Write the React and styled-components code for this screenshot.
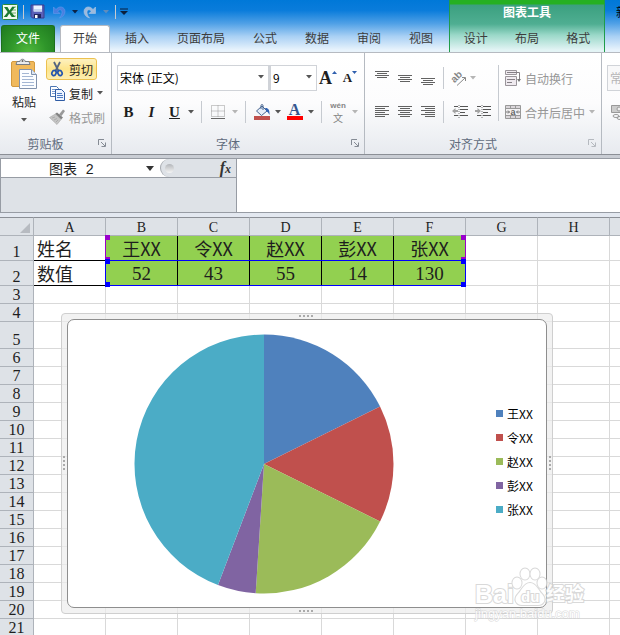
import React, { Component } from 'react'
import styled, { createGlobalStyle } from 'styled-components'

const names = ['王XX', '令XX', '赵XX', '彭XX', '张XX']
const values = [52, 43, 55, 14, 130]
const colors = ['#4f81bd', '#c0504d', '#9bbb59', '#8064a2', '#4bacc6']
const columns = ['A', 'B', 'C', 'D', 'E', 'F', 'G', 'H', 'I']
const rowHeights = { 1: 25, 2: 25, 5: 27 }
const rows = Array.from({ length: 21 }, (_, i) => i + 1)

const Arrow = ({ color = '#555' }) => (
    <svg width="6" height="4" viewBox="0 0 6 4"><path d="M0 0h6L3 3.5z" fill={color} /></svg>
)

const Launcher = ({ faded }) => (
    <svg width="8" height="8" viewBox="0 0 8 8" fill="none" stroke={faded ? '#b5b9bf' : '#858b94'}>
        <path d="M.5 6V.5H6M3 3l4 4M7.500 3.500v4h-4" />
    </svg>
)

const ExcelIcon = () => (
    <svg width="16" height="16" viewBox="0 0 16 16">
        <rect x=".5" y=".5" width="15" height="15" rx="1" fill="#f1f9ef" stroke="#2c8a3a" />
        <path d="M10 3h4M10 6h4M10 9h4M10 12h4" stroke="#74b36b" />
        <path d="M2 3h3.500l2 3.500L10 3h3L9.200 8l4 5H9.700L7.300 9.600 5 13H1.700l4-5z" fill="#1d7b31" />
    </svg>
)

const SaveIcon = () => (
    <svg width="15" height="15" viewBox="0 0 15 15">
        <path d="M1 1h13v13H2.500L1 12.500z" fill="#5a60b8" stroke="#383e90" />
        <path d="M3.500 1.500h8.500v6H3.500z" fill="#eaf2ff" />
        <path d="M4 5h8v2.500H4z" fill="#c3d3f0" />
        <path d="M4 10h7v4H4z" fill="#20255e" />
        <path d="M5 11h2.500v3H5z" fill="#fff" />
    </svg>
)

const UndoIcon = ({ redo }) => (
    <svg width="14" height="14" viewBox="0 0 14 14">
        <g transform={redo ? 'translate(14 0) scale(-1 1)' : undefined}>
            <path
                d="M1.500 2v6.500h6.500L5.800 6.300C7.500 4 10 4.500 10 7.500c0 2-1 3.800-2.500 5.500 3.500-1.200 5.500-3.500 5.500-6.500C13 1.500 7 .3 4 4.500z"
                fill={redo ? '#9db9dc' : '#4a7fe0'}
                stroke={redo ? '#a9c8e8' : '#5f9aec'}
                strokeWidth=".6"
            />
        </g>
    </svg>
)

const PasteIcon = () => (
    <svg width="28" height="32" viewBox="0 0 28 32">
        <rect x="1.500" y="3.500" width="23" height="25" rx="1.500" fill="#f0b95c" stroke="#d39a3e" />
        <path d="M7 3.500h3C10 .5 15 .5 15 3.500h4l1 3H6z" fill="#e9ebee" stroke="#777c84" />
        <circle cx="12.500" cy="3" r="1" fill="#666" />
        <path d="M9.500 11.500h12l5 5v14h-17z" fill="#fbfdff" stroke="#8192ac" />
        <path d="M21.500 11.500v5h5" fill="#dce6f3" stroke="#8192ac" />
        <path d="M12 15.500h7M12 18.500h11M12 21.500h12M12 24.500h12M12 27.500h12" stroke="#a3b6d3" />
    </svg>
)

const CutIcon = () => (
    <svg width="16" height="16" viewBox="0 0 16 16" fill="none">
        <path d="M5 1l4.500 9M11 1L6.500 10" stroke="#53647f" strokeWidth="1.800" />
        <ellipse cx="5" cy="12" rx="2" ry="2.600" transform="rotate(25 5 12)" stroke="#2455ae" strokeWidth="1.700" />
        <ellipse cx="11" cy="12" rx="2" ry="2.600" transform="rotate(-25 11 12)" stroke="#2455ae" strokeWidth="1.700" />
    </svg>
)

const CopyIcon = () => (
    <svg width="16" height="16" viewBox="0 0 16 16">
        <path d="M1.500 1.500h6l2 2v8h-8z" fill="#fff" stroke="#4d76b3" />
        <path d="M3 4.500h4M3 6.500h4M3 8.500h4" stroke="#7a9bd0" />
        <path d="M6.500 4.500h6l3 3v8h-9z" fill="#eef4ff" stroke="#2f5ca4" />
        <path d="M8 8.500h5M8 10.500h6M8 12.500h6" stroke="#4f7cc2" />
    </svg>
)

const BrushIcon = () => (
    <svg width="16" height="16" viewBox="0 0 16 16">
        <path d="M10 5.500l4-5 2 1.500-3.500 5z" fill="#999" />
        <path d="M8 3.500l6 5-2 2-6-5.500z" fill="#828282" />
        <path d="M6.500 5L12 10.500l-4 5L.5 8.500z" fill="#c4c4c4" stroke="#a5a5a5" strokeWidth=".6" />
        <path d="M3 9l3-1M5 11l3-1.500M7 13l2-2" stroke="#999" strokeWidth=".6" />
    </svg>
)

const BordersIcon = () => (
    <svg width="14" height="14" viewBox="0 0 14 14" stroke="#999" fill="none">
        <path d="M.5.5h13v11H.5zM.5 6h13M7 .5v11" strokeDasharray="1 1" />
        <path d="M0 13.500h14" stroke="#666" />
    </svg>
)

const FillIcon = () => (
    <svg width="16" height="16" viewBox="0 0 16 16">
        <path d="M2.500 7L8 2l5 5-5.500 4.500z" fill="#e5edf8" stroke="#47648f" />
        <path d="M7 5V1.500c0-1.300 2-1.300 2 0V6" fill="none" stroke="#47648f" />
        <path d="M11 4c3-.5 5 2 4.500 7-1-2-1.500-3-3-3.500z" fill="#2f62b3" />
        <path d="M0 12h16v4H0z" fill="#c0504d" />
    </svg>
)

const RotateIcon = () => (
    <svg width="20" height="20" viewBox="0 0 20 20">
        <text x="3" y="13" transform="rotate(-45 7 11)" fontFamily="Liberation Sans" fontWeight="bold" fontSize="10" fill="#858585">ab</text>
        <path d="M8 17.500l8-7.500M16.500 13V9.500H13" stroke="#888" fill="none" />
    </svg>
)

const WrapIcon = () => (
    <svg width="16" height="16" viewBox="0 0 16 16" fill="none" stroke="#9a959a">
        <path d="M.5.5h11v4H.5zM.5 6.500h11v9H.5z" fill="#efeaef" />
        <path d="M2 2.500h12.500v7M2 9.500h8M2 12.500h5" stroke="#858085" />
        <path d="M12 9h4l-2 3z" fill="#777" stroke="none" />
    </svg>
)

const MergeIcon = () => (
    <svg width="16" height="16" viewBox="0 0 16 16" fill="none" stroke="#999">
        <path d="M.5 1.500h15v13H.5z" fill="#dad6da" />
        <path d="M.5 4.500h15M.5 11.500h15M5.500 1.500v3M10.500 1.500v3M5.500 11.500v3M10.500 11.500v3" />
        <path d="M1 5h14v6H1z" fill="#f4f2f4" stroke="none" />
        <path d="M1 8h3.500M3 6.500L4.500 8 3 9.500M15 8h-3.500M13 6.500L11.500 8 13 9.500" stroke="#777" />
        <text x="5.500" y="10.500" fontFamily="Liberation Sans" fontWeight="bold" fontSize="9" fill="#666" stroke="none">a</text>
    </svg>
)

const MoneyIcon = () => (
    <svg width="16" height="16" viewBox="0 0 16 16" fill="none" stroke="#999">
        <path d="M.5 1.500h15v7H.5z" fill="#ccc" />
        <circle cx="8" cy="5" r="2" fill="#eee" />
        <ellipse cx="5" cy="12" rx="3" ry="1.500" />
        <ellipse cx="9" cy="14" rx="3" ry="1.500" />
    </svg>
)

// each line is [x, width], drawn every 2px from the given top
const Lines = ({ lines, top = 2 }) => (
    <svg width="16" height="16" viewBox="0 0 16 16">
        {lines.map(([x, w], i) => (
            <rect key={i} x={x} y={top + i * 2} width={w} height="1" fill="#626262" />
        ))}
    </svg>
)

const IndentIcon = ({ out }) => (
    <svg width="16" height="16" viewBox="0 0 16 16" fill="none">
        <path d="M2 2.500h4M8 2.500h8M8 5.500h8M8 8.500h5M2 11.500h4M8 11.500h8" stroke="#555" />
        <path d="M7 1v14" stroke="#777" strokeDasharray="1 1" />
        <path d={out ? 'M0 7l3.500-3v2H6v2H3.500v2z' : 'M6 7L2.500 4v2H0v2h2.500v2z'} fill="#a3a3a3" />
    </svg>
)

const Pie = () => {
    const total = values.reduce((a, b) => a + b, 0)
    let angle = -Math.PI / 2
    return (
        <svg width="260" height="260" viewBox="0 0 260 260">
            {values.map((value, i) => {
                const end = angle + (value / total) * Math.PI * 2
                const d = `M130 130L${130 + 129.5 * Math.cos(angle)} ${130 + 129.5 * Math.sin(angle)}A129.5 129.5 0 0 1 ${130 + 129.5 * Math.cos(end)} ${130 + 129.5 * Math.sin(end)}z`
                angle = end
                return <path key={names[i]} d={d} fill={colors[i]} />
            })}
        </svg>
    )
}

const left = [[1, 14], [1, 10], [1, 14], [1, 10], [1, 14], [1, 10]]
const center = [[1, 14], [3, 10], [1, 14], [3, 10], [1, 14], [3, 10]]
const right = [[1, 14], [5, 10], [1, 14], [5, 10], [1, 14], [5, 10]]
const valign = [[1, 14], [3, 10], [1, 14], [3, 10]]

class App extends Component {

    state = {
        font: '宋体 (正文)',
        size: '9',
        nameBox: '图表 2',
        formula: ''
    }

    handleChange = (event) => {
        this.setState({ [event.target.name]: event.target.value })
    }

    renderCell = (column, row) => {
        const index = columns.indexOf(column) - 1
        if (row > 2 || index > 4) {
            return <Cell key={column} />
        }
        if (index < 0) {
            return <LabelCell key={column}>{row === 1 ? '姓名' : '数值'}</LabelCell>
        }
        return (
            <DataCell key={column} $number={row === 2}>
                {row === 1 ? names[index] : values[index]}
            </DataCell>
        )
    }

    render() {
        return (
            <Window>
                <GlobalStyle />
                <Header>
                    <MainHeader>
                        <QuickAccess>
                            <Tool $w={18} aria-label="Excel"><ExcelIcon /></Tool>
                            <Divider $w={8} $h={14} />
                            <Tool $w={20} aria-label="保存"><SaveIcon /></Tool>
                            <Tool $w={24} aria-label="撤消"><UndoIcon /></Tool>
                            <Tool $w={7} aria-label="撤消列表"><Arrow color="#0b2346" /></Tool>
                            <Tool $w={24} aria-label="恢复"><UndoIcon redo /></Tool>
                            <Tool $w={7} aria-label="恢复列表"><Arrow color="#5f8dbd" /></Tool>
                            <Divider $w={12} $h={14} />
                            <Tool $w={6} aria-label="自定义快速访问工具栏">
                                <svg width="8" height="8" viewBox="0 0 8 8">
                                    <path d="M0 1h8" stroke="#0b1f3c" />
                                    <path d="M0 3h8L4 7z" fill="#0b1f3c" />
                                </svg>
                            </Tool>
                        </QuickAccess>
                        <Tabs>
                            <FileTab>文件</FileTab>
                            <ActiveTab>开始</ActiveTab>
                            {['插入', '页面布局', '公式', '数据', '审阅', '视图'].map(tab => <Tab key={tab}>{tab}</Tab>)}
                        </Tabs>
                    </MainHeader>
                    <ContextHeader>
                        <ContextTitle>图表工具</ContextTitle>
                        <Tabs>
                            <Tab>设计</Tab>
                            <Tab>布局</Tab>
                            <Tab>格式</Tab>
                        </Tabs>
                    </ContextHeader>
                    <DocTitle>新</DocTitle>
                </Header>

                <Ribbon>
                    <Group $w={112}>
                        <Clipboard>
                            <PasteButton><PasteIcon /><span>粘贴</span><Arrow /></PasteButton>
                            <ClipboardList>
                                <TextTool $active><CutIcon />剪切</TextTool>
                                <TextTool><CopyIcon />复制<Arrow /></TextTool>
                                <TextTool $faded><BrushIcon />格式刷</TextTool>
                            </ClipboardList>
                        </Clipboard>
                        <GroupLabel><span>剪贴板</span><Launcher /></GroupLabel>
                    </Group>

                    <Group $w={253}>
                        <Rows>
                            <Row $h={26}>
                                <Combo $w={152}>
                                    <select name="font" aria-label="字体" value={this.state.font} onChange={this.handleChange}>
                                        <option>宋体 (正文)</option>
                                    </select>
                                    <Arrow />
                                </Combo>
                                <Combo $w={48}>
                                    <select name="size" aria-label="字号" value={this.state.size} onChange={this.handleChange}>
                                        <option>9</option>
                                    </select>
                                    <Arrow />
                                </Combo>
                                <Letter $w={22} $size={18} aria-label="增大字号">A<svg width="5" height="14" viewBox="0 0 5 14"><path d="M0 3h5L2.500 0z" fill="#2f5fae" /></svg></Letter>
                                <Letter $w={22} $size={13} aria-label="减小字号">A<svg width="5" height="14" viewBox="0 0 5 14"><path d="M0 0h5L2.500 3z" fill="#2f5fae" /></svg></Letter>
                            </Row>
                            <Row $h={22}>
                                <Letter $w={23} $size={15}>B</Letter>
                                <Letter $w={23} $size={15} $italic>I</Letter>
                                <Letter $w={23} $size={15} $underline>U</Letter>
                                <Tool $w={10} aria-label="下划线样式"><Arrow /></Tool>
                                <Divider $w={10} $h={22} />
                                <Tool $w={24} aria-label="边框"><BordersIcon /></Tool>
                                <Tool $w={10} aria-label="边框样式"><Arrow color="#b5b5b5" /></Tool>
                                <Divider $w={10} $h={22} />
                                <Tool $w={23} aria-label="填充颜色"><FillIcon /></Tool>
                                <Tool $w={10} aria-label="填充颜色列表"><Arrow /></Tool>
                                <Tool $w={23} aria-label="字体颜色"><FontColor>A</FontColor></Tool>
                                <Tool $w={10} aria-label="字体颜色列表"><Arrow /></Tool>
                                <Divider $w={10} $h={22} />
                                <Tool $w={24} aria-label="拼音">
                                    <svg width="18" height="22" viewBox="0 0 18 22" fill="#858585" textAnchor="middle">
                                        <text x="9" y="7" fontFamily="Liberation Sans" fontSize="8" fontWeight="bold">wén</text>
                                        <text x="9" y="21" fontFamily="Noto Sans CJK SC" fontSize="10">文</text>
                                    </svg>
                                </Tool>
                                <Tool $w={10} aria-label="拼音列表"><Arrow color="#b5b5b5" /></Tool>
                            </Row>
                        </Rows>
                        <GroupLabel><span>字体</span><Launcher /></GroupLabel>
                    </Group>

                    <Group $w={237}>
                        <Columns>
                            <Rows>
                                <Row $h={26}>
                                    <Tool $w={23} aria-label="顶端对齐"><Lines lines={valign} top={1} /></Tool>
                                    <Tool $w={23} aria-label="垂直居中"><Lines lines={valign} top={5} /></Tool>
                                    <Tool $w={23} aria-label="底端对齐"><Lines lines={valign} top={8} /></Tool>
                                    <Divider $w={9} $h={22} />
                                    <Tool $w={22} aria-label="方向"><RotateIcon /></Tool>
                                    <Tool $w={6} aria-label="方向列表"><Arrow color="#b5b5b5" /></Tool>
                                </Row>
                                <Row $h={22}>
                                    <Tool $w={23} aria-label="左对齐"><Lines lines={left} /></Tool>
                                    <Tool $w={23} aria-label="居中"><Lines lines={center} /></Tool>
                                    <Tool $w={23} aria-label="右对齐"><Lines lines={right} /></Tool>
                                    <Divider $w={9} $h={22} />
                                    <Tool $w={23} aria-label="减少缩进量"><IndentIcon out /></Tool>
                                    <Tool $w={23} aria-label="增加缩进量"><IndentIcon /></Tool>
                                </Row>
                            </Rows>
                            <Divider $w={8} $h={56} />
                            <Rows>
                                <Row $h={26}><TextTool $faded><WrapIcon />自动换行</TextTool></Row>
                                <Row $h={22}><TextTool $faded><MergeIcon />合并后居中<Arrow color="#b5b5b5" /></TextTool></Row>
                            </Rows>
                        </Columns>
                        <GroupLabel><span>对齐方式</span><Launcher faded /></GroupLabel>
                    </Group>

                    <Group $w={120}>
                        <Rows>
                            <Row $h={26}>
                                <Combo $w={100} $faded>
                                    <select aria-label="数字格式" disabled><option>常规</option></select>
                                    <Arrow />
                                </Combo>
                            </Row>
                            <Row $h={22}><Tool $w={24} aria-label="会计数字格式"><MoneyIcon /></Tool></Row>
                        </Rows>
                    </Group>
                </Ribbon>

                <FormulaBar>
                    <NameArea>
                        <NameRow>
                            <NameInput name="nameBox" aria-label="名称框" value={this.state.nameBox} onChange={this.handleChange} />
                            <NameArrow aria-label="名称列表">
                                <svg width="8" height="5" viewBox="0 0 8 5"><path d="M0 0h8L4 5z" fill="#333" /></svg>
                            </NameArrow>
                            <FxBar>
                                <Knob />
                                <FxButton aria-label="插入函数"><i>f</i><small>x</small></FxButton>
                            </FxBar>
                        </NameRow>
                    </NameArea>
                    <FormulaInput name="formula" aria-label="编辑栏" value={this.state.formula} onChange={this.handleChange} />
                </FormulaBar>

                <Sheet>
                    <Grid>
                        <colgroup>
                            <col width="34" />
                            {columns.map(column => <col key={column} width="72" />)}
                        </colgroup>
                        <thead>
                            <tr>
                                <HeadCell aria-label="全选">
                                    <svg width="10" height="10" viewBox="0 0 10 10"><path d="M10 0v10H0z" fill="#b7bbc1" /></svg>
                                </HeadCell>
                                {columns.map(column => <HeadCell key={column} scope="col">{column}</HeadCell>)}
                            </tr>
                        </thead>
                        <tbody>
                            {rows.map(row => (
                                <GridRow key={row} $h={rowHeights[row] || 18}>
                                    <RowHead scope="row">{row}</RowHead>
                                    {columns.map(column => this.renderCell(column, row))}
                                </GridRow>
                            ))}
                        </tbody>
                    </Grid>

                    <Range $color="#9900cc" $top={19} $height={25}><i /><i /><i /><i /></Range>
                    <Range $color="#0000ff" $top={43} $height={26}><i /><i /><i /><i /></Range>

                    <ChartFrame>
                        <Chart>
                            <Pie />
                            <Legend>
                                {names.map((name, i) => <LegendItem key={name} $color={colors[i]}>{name}</LegendItem>)}
                            </Legend>
                        </Chart>
                        <Grip $side="top" />
                        <Grip $side="bottom" />
                        <Grip $side="left" />
                        <Grip $side="right" />
                    </ChartFrame>

                    <Watermark>
                        <svg width="116" height="58" viewBox="0 0 116 58" fill="#fff" stroke="#d0d0d0" strokeWidth="2" paintOrder="stroke">
                            <text x="2" y="37" fontFamily="Liberation Sans" fontWeight="bold" fontSize="25">Bai</text>
                            <ellipse cx="44" cy="17" rx="4.500" ry="5.500" />
                            <ellipse cx="52" cy="8" rx="4.500" ry="5.500" />
                            <ellipse cx="62" cy="8" rx="4.500" ry="5.500" />
                            <ellipse cx="69" cy="17" rx="4.500" ry="5.500" />
                            <path d="M57 17c6 0 8 7 12 11 5 5 2 11-4 11H49c-6 0-9-6-4-11 4-4 6-11 12-11z" />
                            <text x="48" y="36" fontFamily="Liberation Sans" fontWeight="bold" fontSize="15">du</text>
                            <text x="73" y="35" fontFamily="Noto Sans CJK SC" fontWeight="bold" fontSize="19">经验</text>
                            <text x="2" y="52" fontFamily="Liberation Sans" fontSize="13" strokeWidth="1">jingyan.baidu.com</text>
                        </svg>
                    </Watermark>
                </Sheet>
            </Window>
        )
    }
}

export default App


const GlobalStyle = createGlobalStyle`
* {
    box-sizing: border-box;
}
body {
    margin: 0;
    overflow: hidden;
    font-family: "Noto Sans CJK SC", sans-serif;
    font-size: 12px;
    color: #1e1e1e;
}
button, input, select, textarea {
    font: inherit;
    color: inherit;
    border: 0;
    padding: 0;
    margin: 0;
    background: none;
}
svg {
    display: block;
    flex: none;
}
`

const Window = styled.div`
display: flex;
flex-direction: column;
height: 100vh;
background: #fff;
`

const Header = styled.header`
display: flex;
height: 53px;
overflow: hidden;
border-bottom: 1px solid #b6bac1;
background: linear-gradient(#0078d8 0, #0a7cdb 20%, #4fa0e6 45%, #a9d0f4 70%, #e8f3fc 96%);
`

const MainHeader = styled.div`
flex: none;
width: 449px;
`

const QuickAccess = styled.div`
display: flex;
align-items: center;
height: 25px;
padding: 0 0 2px 1px;
`

const Tabs = styled.nav`
display: flex;
height: 28px;
`

const Tab = styled.button`
height: 27px;
padding: 0 14px 1px;
line-height: 26px;
color: #3c3c3c;
white-space: nowrap;
`

const FileTab = styled(Tab)`
margin: 0 5px 0 1px;
padding: 0 14px 2px;
width: 54px;
border: 1px solid #1c6f1c;
border-bottom: 0;
border-radius: 3px 3px 0 0;
line-height: 24px;
color: #fff;
background: radial-gradient(ellipse at 50% 100%, #4fb83c, #2f962a 50%, #1f7a1f 100%);
`

const ActiveTab = styled(Tab)`
width: 50px;
margin-right: 1px;
padding: 0 11px 3px;
height: 28px;
border: 1px solid #b6bac1;
border-bottom: 0;
border-radius: 3px 3px 0 0;
line-height: 24px;
background: #fff;
`

const ContextHeader = styled.div`
flex: none;
width: 156px;
border-left: 1px solid #1f9c4a;
border-right: 1px solid #1f9c4a;
background: linear-gradient(#25b022 0, #25b022 4px, #3ba07f 5px, #4fae92 24px, #9ad8c8 35px, #e3f4f5 50px);

${Tab} {
    padding: 0 13px 1px;
    width: 52px;
}
`

const ContextTitle = styled.div`
height: 25px;
line-height: 24px;
text-align: center;
color: #fff;
font-weight: bold;
`

const DocTitle = styled.div`
flex: 1;
padding-left: 11px;
line-height: 24px;
white-space: nowrap;
overflow: hidden;
color: #000;
`

const Ribbon = styled.div`
display: flex;
flex: none;
height: 102px;
overflow: hidden;
border-bottom: 1px solid #8b8f96;
background: linear-gradient(#fff 0, #fcfcfd 50%, #e7eaef 100%);
`

const Group = styled.section`
display: flex;
flex-direction: column;
flex: none;
width: ${props => props.$w}px;
border-right: 1px solid #b5bac1;
`

const GroupLabel = styled.div`
display: flex;
align-items: center;
height: 22px;
padding-right: 5px;
color: #606b7c;

span {
    flex: 1;
    padding-right: 7px;
    text-align: center;
}
`

const Clipboard = styled.div`
display: flex;
flex: 1;
padding-top: 5px;
`

const PasteButton = styled.button`
display: flex;
flex-direction: column;
align-items: center;
width: 46px;
padding-left: 2px;

span {
    line-height: 24px;
}
svg:last-child {
    margin-top: 4px;
}
`

const ClipboardList = styled.div`
display: flex;
flex-direction: column;
align-items: flex-start;
gap: 2px;
`

const TextTool = styled.button`
display: flex;
align-items: center;
gap: 4px;
height: 22px;
padding: 0 3px 0 2px;
border: 1px solid ${props => props.$active ? '#ecc14f' : 'transparent'};
border-radius: 3px;
background: ${props => props.$active ? 'linear-gradient(#fdf1c0, #fde58c 50%, #fdeeb0)' : 'none'};
color: ${props => props.$faded ? '#979797' : '#1e1e1e'};
white-space: nowrap;
`

const Columns = styled.div`
display: flex;
flex: 1;
align-items: flex-start;

> span {
    margin-top: 12px;
}
`

const Rows = styled.div`
display: flex;
flex-direction: column;
flex: 1;
gap: 10px;
padding: 12px 0 0 5px;

span + & {
    padding-left: 0;
}
`

const Row = styled.div`
display: flex;
align-items: center;
height: ${props => props.$h}px;
`

const Combo = styled.div`
display: flex;
align-items: center;
flex: none;
width: ${props => props.$w}px;
height: 26px;
padding: 0 4px 2px 2px;
border: 1px solid #d0d3d8;
background: ${props => props.$faded ? '#f8f8f9' : '#fff'};
color: ${props => props.$faded ? '#999' : '#000'};

& + & {
    border-left-width: 2px;
}
select {
    flex: 1;
    appearance: none;
    outline: none;
}
`

const Tool = styled.button`
display: flex;
align-items: center;
justify-content: center;
flex: none;
width: ${props => props.$w}px;
height: 22px;
`

const Letter = styled(Tool)`
font-family: "Liberation Serif", serif;
font-size: ${props => props.$size}px;
font-weight: bold;
font-style: ${props => props.$italic ? 'italic' : 'normal'};
text-decoration: ${props => props.$underline ? 'underline' : 'none'};
`

const FontColor = styled.span`
width: 16px;
height: 16px;
border-bottom: 4px solid #f00;
line-height: 12px;
font-family: "Liberation Serif", serif;
font-size: 16px;
font-weight: bold;
color: #35568f;
`

const Divider = styled.span`
display: flex;
justify-content: center;
flex: none;
width: ${props => props.$w}px;
height: ${props => props.$h}px;

&::before {
    content: "";
    width: 1px;
    background: #c6cad0;
}
`

const FormulaBar = styled.div`
display: flex;
flex: none;
height: 62px;
padding-top: 3px;
border-bottom: 4px solid #e3e8f0;
background: #c9cdd4;
`

const NameArea = styled.div`
width: 237px;
border: 1px solid #979ca4;
background: #dee2e7;
`

const NameRow = styled.div`
display: flex;
height: 19px;
border-bottom: 1px solid #979ca4;
background: #fff;
`

const NameInput = styled.input`
width: 142px;
padding-left: 48px;
font-family: "Liberation Mono", "Noto Sans CJK SC", monospace;
font-size: 14px;
outline: none;
`

const NameArrow = styled.button`
display: flex;
align-items: center;
justify-content: center;
width: 17px;
padding-right: 3px;
`

const FxBar = styled.div`
display: flex;
align-items: center;
justify-content: space-between;
flex: 1;
padding: 0 5px 0 4px;
border-left: 1px solid #a5a9af;
border-radius: 9px 0 0 9px;
background: #dee2e7;
`

const Knob = styled.span`
width: 9px;
height: 9px;
border-radius: 50%;
background: linear-gradient(#b3b6ba, #f5f5f5);
`

const FxButton = styled.button`
line-height: 16px;
font-family: "Liberation Serif", serif;
font-weight: bold;
font-style: italic;
font-size: 16px;
color: #333;

small {
    font-size: 12px;
}
`

const FormulaInput = styled.textarea`
flex: 1;
min-width: 0;
border-top: 1px solid #979ca4;
border-bottom: 1px solid #979ca4;
background: #fff;
resize: none;
outline: none;
`

const Sheet = styled.main`
position: relative;
flex: 1;
min-height: 0;
overflow: hidden;
`

const Grid = styled.table`
table-layout: fixed;
width: 682px;
border-collapse: separate;
border-spacing: 0;
`

const HeadCell = styled.th`
height: 19px;
padding: 2px 0 0;
border-top: 1px solid #8b8f96;
border-right: 1px solid #aeb3ba;
border-bottom: 1px solid #aeb3ba;
background: #dee2e7;
font-family: "Liberation Serif", serif;
font-size: 14px;
font-weight: normal;
line-height: 15px;

svg {
    margin-left: 20px;
}
`

const RowHead = styled.th`
padding: 0;
border-right: 1px solid #aeb3ba;
border-bottom: 1px solid #aeb3ba;
background: #dee2e7;
font-family: "Liberation Serif", serif;
font-size: 16px;
font-weight: normal;
line-height: 16px;
vertical-align: bottom;
`

const GridRow = styled.tr`
height: ${props => props.$h}px;
`

const Cell = styled.td`
padding: 0;
border-right: 1px solid #d9d9d9;
border-bottom: 1px solid #d9d9d9;
`

const LabelCell = styled(Cell)`
padding-left: 3px;
border-bottom-color: #000;
font-size: 18px;
line-height: 24px;
`

const DataCell = styled(Cell)`
padding-top: ${props => props.$number ? 2 : 0}px;
border-color: #000;
background: #92d050;
text-align: center;
font-family: ${props => props.$number ? '"Liberation Serif", serif' : '"Noto Sans CJK SC", sans-serif'};
font-size: ${props => props.$number ? 19 : 18}px;
line-height: ${props => props.$number ? 22 : 24}px;
`

// outline with four corner handles, drawn round the chart's source cells
const Range = styled.div`
position: absolute;
left: 105px;
top: ${props => props.$top}px;
width: 361px;
height: ${props => props.$height}px;
border: 1px solid ${props => props.$color};
border-top-color: ${props => props.$top < 20 ? 'transparent' : props.$color};

i {
    position: absolute;
    width: 5px;
    height: 5px;
    background: ${props => props.$color};
}
i:nth-child(odd) {
    left: -1px;
}
i:nth-child(even) {
    right: -1px;
}
i:nth-child(-n+2) {
    top: -2px;
}
i:nth-child(n+3) {
    bottom: -2px;
}
`

const ChartFrame = styled.div`
position: absolute;
left: 61px;
top: 96px;
width: 492px;
height: 301px;
padding: 5px;
border: 1px solid #cfcfcf;
border-radius: 4px;
background: rgba(236, 236, 236, 0.7);
`

const Chart = styled.div`
display: flex;
align-items: center;
height: 100%;
padding-left: 66px;
border: 1px solid #8e8e8e;
border-radius: 7px;
background: #fff;
`

const Legend = styled.div`
margin: 0 0 4px 102px;
`

const LegendItem = styled.div`
display: flex;
align-items: center;
gap: 4px;
height: 24px;
color: #000;

&::before {
    content: "";
    width: 7px;
    height: 7px;
    background: ${props => props.$color};
}
`

const Grip = styled.span`
position: absolute;
${props => props.$side}: 1px;
${props => props.$side === 'top' || props.$side === 'bottom'
        ? 'left: calc(50% - 8px); width: 16px; height: 2px;'
        : 'top: calc(50% - 8px); width: 2px; height: 16px;'}
background: ${props => `repeating-linear-gradient(${props.$side === 'top' || props.$side === 'bottom' ? '90deg' : '180deg'}, #aaa 0, #aaa 2px, transparent 2px, transparent 4px)`};
`

const Watermark = styled.div`
position: absolute;
left: 473px;
top: 349px;
opacity: 0.8;
`
